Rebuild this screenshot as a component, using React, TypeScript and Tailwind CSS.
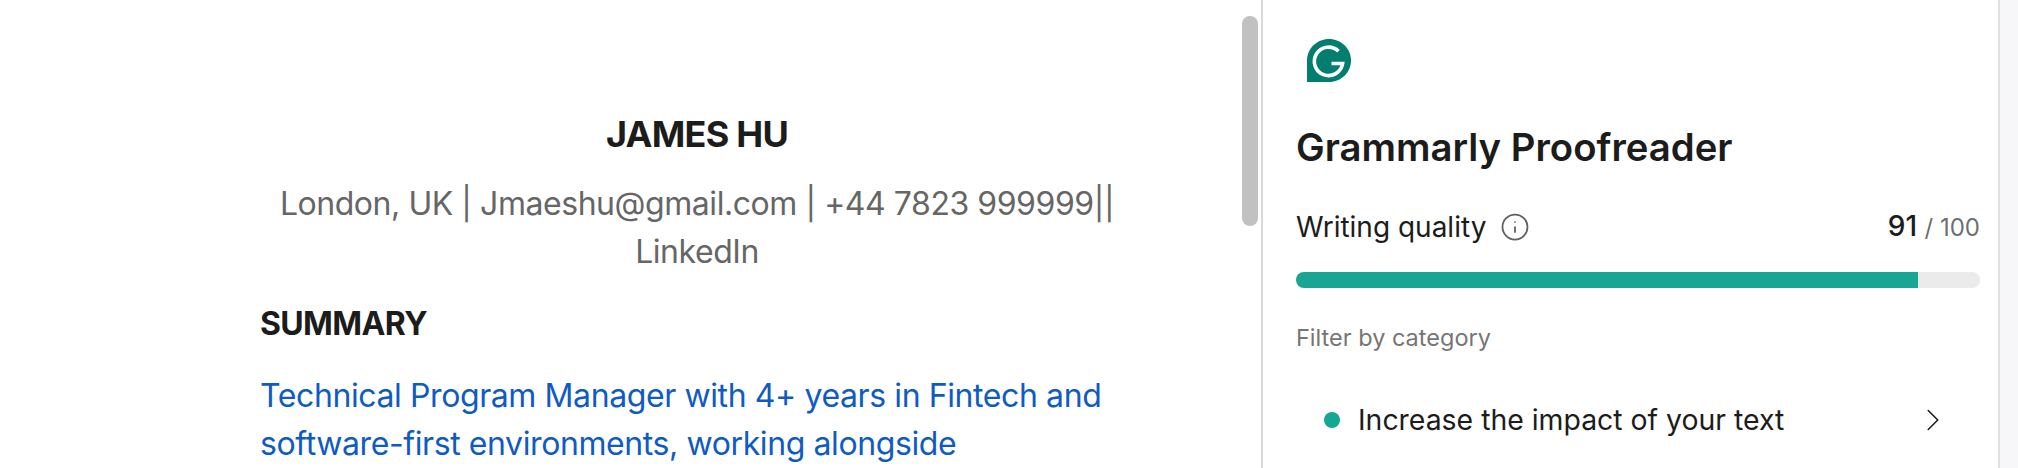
import { ChevronRight, Info } from "lucide-react";

const font = { fontFamily: "Inter, sans-serif" };

function GrammarlyLogo() {
  return (
    <svg width="44" height="43" viewBox="0 0 44 43" className="ml-[11px]">
      <path
        d="M0 43V21.5C0 9.6 9.8 0 22 0s22 9.6 22 21.5S34.2 43 22 43Z"
        fill="#027e6f"
      />
      <path
        d="M31.5 12.2A14.2 14.2 0 1 0 35.6 24.5H24.5"
        fill="none"
        stroke="#fff"
        strokeWidth="3.6"
      />
    </svg>
  );
}

function ResumePane() {
  return (
    <div className="relative w-[1263px] shrink-0 border-r-2 border-[#d9d9d9] pl-[260px] pt-[110px]">
      <div className="w-[874px]">
        <h1 className="text-center text-[36px] leading-[48px] font-bold tracking-[-0.02em] text-[#1c1c1c]">
          JAMES HU
        </h1>
        <p className="mt-[22px] text-center text-[32px] leading-[48px] tracking-[-0.45px] text-[#666666]">
          London, UK | Jmaeshu@gmail.com | +44 7823 999999|| LinkedIn
        </p>
        <h2 className="mt-[24px] text-[32px] leading-[48px] font-bold tracking-[-0.02em] text-[#1c1c1c]">
          SUMMARY
        </h2>
        <p className="mt-[24px] text-[32px] leading-[48px] tracking-[-0.4px] text-[#0f5bc4]">
          Technical Program Manager with 4+ years in Fintech and software-first
          environments, working alongside
        </p>
      </div>
      {/* Scrollbar */}
      <div className="absolute top-[16px] right-[3px] h-[210px] w-[16px] rounded-full bg-[#c1c1c1]" />
    </div>
  );
}

function ProofreaderPanel() {
  return (
    <aside className="w-[737px] shrink-0 border-r-2 border-[#e0e0e0] pt-[39px] pl-[33px] pr-[18px]">
      <GrammarlyLogo />
      <h2 className="mt-[41px] text-[38.3px] leading-[48px] font-semibold text-[#1c1c1c]">
        Grammarly Proofreader
      </h2>
      <div className="mt-[35px] flex items-center justify-between">
        <div className="flex items-center gap-[14px]">
          <span className="text-[28px] leading-[40px] text-[#1c1c1c]">
            Writing quality
          </span>
          <Info size={30} strokeWidth={1.4} className="text-[#5f5f5f]" />
        </div>
        <div className="text-[28px] leading-[40px] font-medium text-[#1c1c1c]">
          91 <span className="text-[24px] font-normal text-[#6f6f6f]">/ 100</span>
        </div>
      </div>
      <div className="mt-[24px] h-[16px] w-full overflow-hidden rounded-full bg-[#ebebeb]">
        <div className="h-full bg-[#17a694]" style={{ width: "91%" }} />
      </div>
      <p className="mt-[34px] text-[23.5px] leading-[32px] text-[#757575]">
        Filter by category
      </p>
      <div className="mt-[46px] flex items-center pl-[28px] pr-[28px]">
        <span className="h-[16px] w-[16px] rounded-full bg-[#17a694]" />
        <span className="ml-[18px] flex-1 text-[28.4px] leading-[40px] text-[#1c1c1c]">
          Increase the impact of your text
        </span>
        <ChevronRight size={38} strokeWidth={1} className="text-[#1c1c1c]" />
      </div>
    </aside>
  );
}

export default function App() {
  return (
    <div className="flex h-[468px] w-[2018px] overflow-hidden bg-white" style={font}>
      <ResumePane />
      <ProofreaderPanel />
      <div className="flex-1 bg-[#f7f7f9]" />
    </div>
  );
}
